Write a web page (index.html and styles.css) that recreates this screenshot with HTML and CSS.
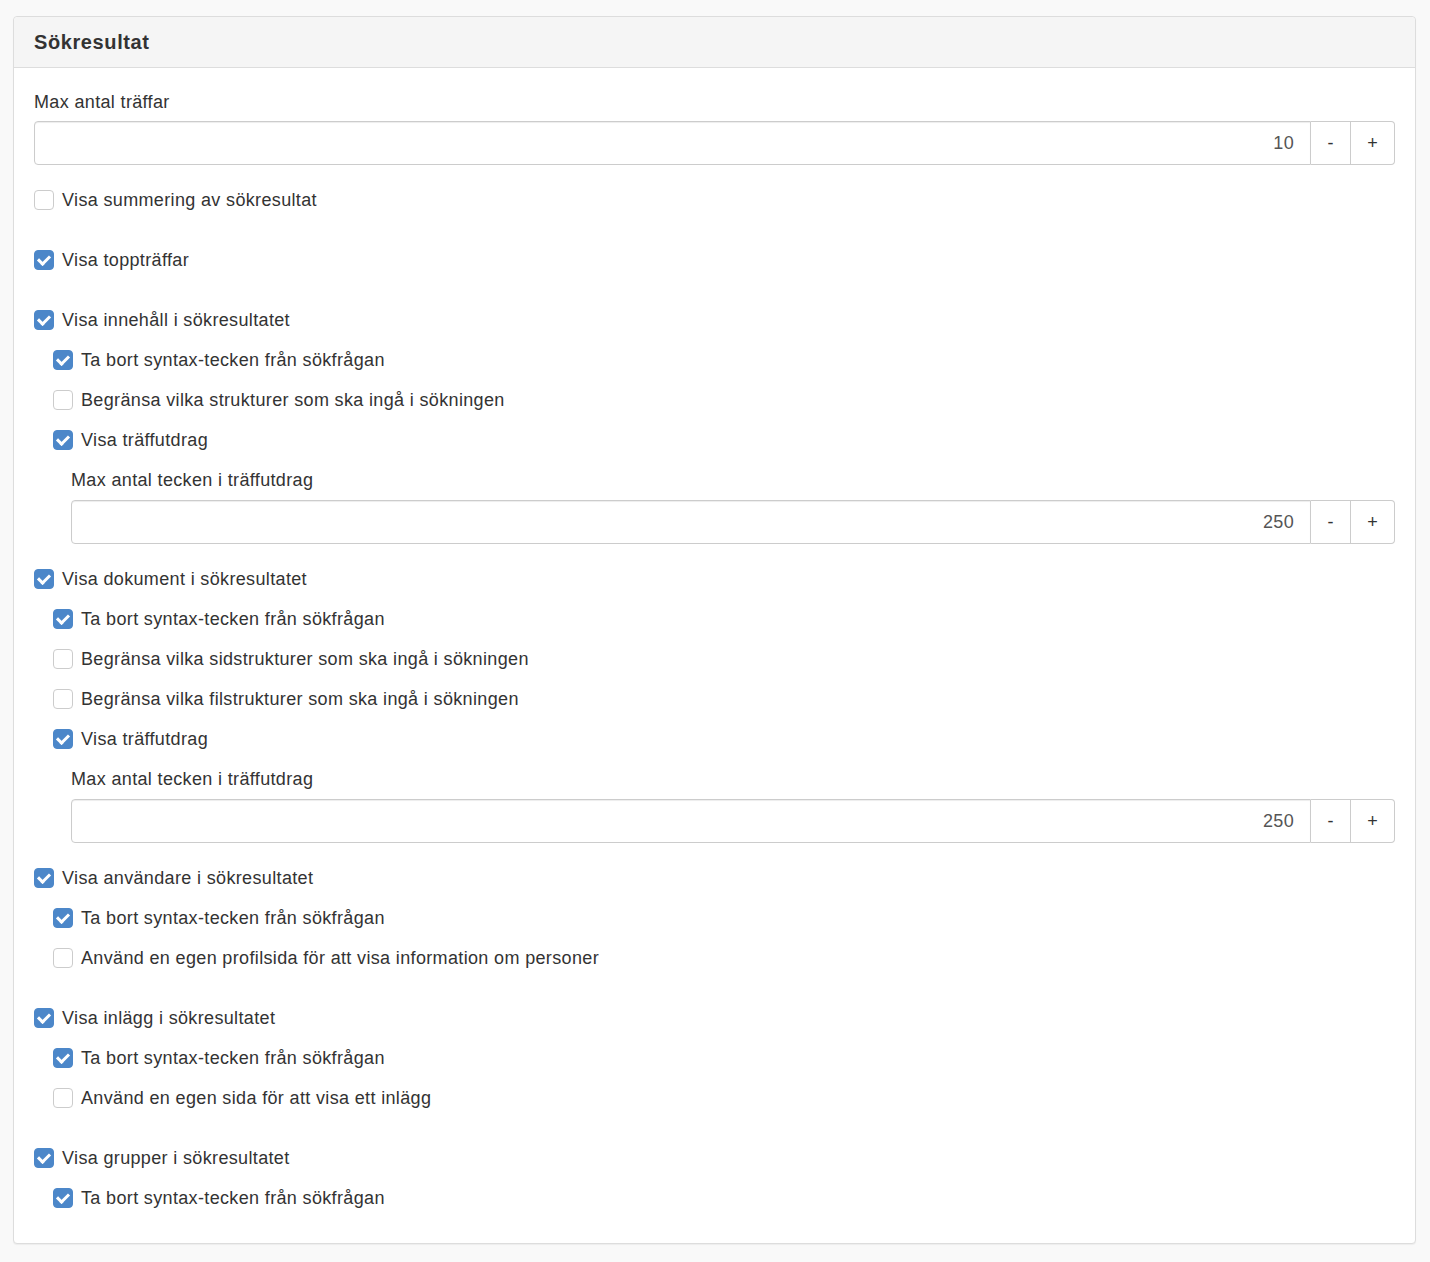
FILE: index.html
```html
<!DOCTYPE html>
<html lang="sv">
<head>
    <meta charset="UTF-8">
    <meta name="viewport" content="width=device-width, initial-scale=1.0">
    <title>Sökresultat</title>
    <link rel="stylesheet" href="styles.css">
</head>
<body>
    <div class="panel">
        <div class="panel-heading">
            <h3>Sökresultat</h3>
        </div>
        <div class="panel-body">

            <!-- Max antal träffar -->
            <div class="group group-field">
                <label class="field-label">Max antal träffar</label>
                <div class="spinner">
                    <input type="text" value="10">
                    <button class="minus">-</button>
                    <button class="plus">+</button>
                </div>
            </div>

            <div class="group">
                <label class="check"><span class="box"></span>Visa summering av sökresultat</label>
            </div>

            <div class="group">
                <label class="check"><span class="box checked"></span>Visa toppträffar</label>
            </div>

            <!-- Innehåll -->
            <div class="group group-field">
                <label class="check"><span class="box checked"></span>Visa innehåll i sökresultatet</label>
                <div class="nested">
                    <label class="check"><span class="box checked"></span>Ta bort syntax-tecken från sökfrågan</label>
                    <label class="check"><span class="box"></span>Begränsa vilka strukturer som ska ingå i sökningen</label>
                    <label class="check"><span class="box checked"></span>Visa träffutdrag</label>
                    <div class="nested">
                        <label class="field-label sub">Max antal tecken i träffutdrag</label>
                        <div class="spinner">
                            <input type="text" value="250">
                            <button class="minus">-</button>
                            <button class="plus">+</button>
                        </div>
                    </div>
                </div>
            </div>

            <!-- Dokument -->
            <div class="group group-field">
                <label class="check"><span class="box checked"></span>Visa dokument i sökresultatet</label>
                <div class="nested">
                    <label class="check"><span class="box checked"></span>Ta bort syntax-tecken från sökfrågan</label>
                    <label class="check"><span class="box"></span>Begränsa vilka sidstrukturer som ska ingå i sökningen</label>
                    <label class="check"><span class="box"></span>Begränsa vilka filstrukturer som ska ingå i sökningen</label>
                    <label class="check"><span class="box checked"></span>Visa träffutdrag</label>
                    <div class="nested">
                        <label class="field-label sub">Max antal tecken i träffutdrag</label>
                        <div class="spinner">
                            <input type="text" value="250">
                            <button class="minus">-</button>
                            <button class="plus">+</button>
                        </div>
                    </div>
                </div>
            </div>

            <!-- Användare -->
            <div class="group">
                <label class="check"><span class="box checked"></span>Visa användare i sökresultatet</label>
                <div class="nested">
                    <label class="check"><span class="box checked"></span>Ta bort syntax-tecken från sökfrågan</label>
                    <label class="check"><span class="box"></span>Använd en egen profilsida för att visa information om personer</label>
                </div>
            </div>

            <!-- Inlägg -->
            <div class="group">
                <label class="check"><span class="box checked"></span>Visa inlägg i sökresultatet</label>
                <div class="nested">
                    <label class="check"><span class="box checked"></span>Ta bort syntax-tecken från sökfrågan</label>
                    <label class="check"><span class="box"></span>Använd en egen sida för att visa ett inlägg</label>
                </div>
            </div>

            <!-- Grupper -->
            <div class="group">
                <label class="check"><span class="box checked"></span>Visa grupper i sökresultatet</label>
                <div class="nested">
                    <label class="check"><span class="box checked"></span>Ta bort syntax-tecken från sökfrågan</label>
                </div>
            </div>

        </div>
    </div>
</body>
</html>
```

FILE: styles.css
```css
body {
    background-color: #f9f9f9;
    color: #333333;
    font-family: "Liberation Sans", Arial, sans-serif;
    font-size: 18px;
    letter-spacing: 0.35px;
    margin: 0;
    padding: 16px 14px 18px 13px;
}
.panel {
    background-color: #ffffff;
    border: 1px solid #dddddd;
    border-radius: 4px;
    box-shadow: 0 1px 1px rgba(0, 0, 0, 0.05);
}
.panel-heading {
    background-color: #f5f5f5;
    border-bottom: 1px solid #dddddd;
    border-radius: 4px 4px 0 0;
    height: 50px;
    padding: 0 20px;
    display: flex;
    align-items: center;
}
.panel-heading h3 {
    margin: 0;
    font-size: 20px;
    letter-spacing: 0.6px;
    font-weight: bold;
}
.panel-body {
    padding: 22px 20px 5px 20px;
}
.group {
    margin-bottom: 20px;
}
.group-field {
    margin-bottom: 15px;
}
.field-label {
    display: block;
    line-height: 20px;
    padding-top: 2px;
    margin-bottom: 9px;
}
.field-label.sub {
    padding-top: 10px;
    margin-bottom: 10px;
}
.check {
    display: flex;
    align-items: center;
    height: 40px;
    line-height: 20px;
}
.nested {
    padding-left: 19px;
}
.nested .nested {
    padding-left: 18px;
}

/* checkbox squares */
.box {
    width: 18px;
    height: 18px;
    border: 1px solid #cccccc;
    border-radius: 4px;
    background-color: #ffffff;
    margin-right: 8px;
    flex-shrink: 0;
    position: relative;
}
.box.checked {
    background-color: #4c87c9;
    border-color: #4c87c9;
}
.box.checked::after {
    content: "";
    position: absolute;
    left: 5px;
    top: 2px;
    width: 5px;
    height: 9px;
    border: solid #ffffff;
    border-width: 0 3px 3px 0;
    transform: rotate(45deg);
}

/* number spinner */
.spinner {
    display: flex;
    height: 44px;
}
.spinner input {
    flex: 1;
    min-width: 0;
    border: 1px solid #cccccc;
    border-radius: 4px 0 0 4px;
    text-align: right;
    padding: 0 16px;
    font-family: inherit;
    font-size: 18px;
    letter-spacing: 0.35px;
    color: #555555;
    box-shadow: inset 0 1px 1px rgba(0, 0, 0, 0.075);
}
.spinner button {
    background-color: #ffffff;
    border: 1px solid #cccccc;
    border-left: none;
    font-family: inherit;
    font-size: 18px;
    color: #333333;
    padding: 0;
}
.spinner .minus {
    width: 40px;
}
.spinner .plus {
    width: 44px;
    border-radius: 0 4px 4px 0;
}
```
